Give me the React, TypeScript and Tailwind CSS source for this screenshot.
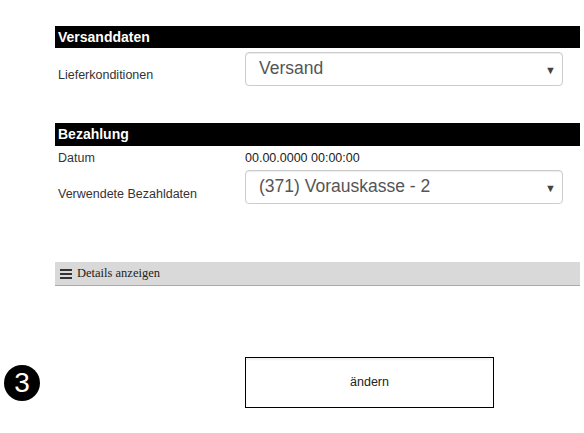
import React from "react";

function Select({ value }: { value: string }) {
  return (
    <div className="relative flex h-[34px] w-[318px] items-center rounded-[4px] border border-[#cccccc] bg-white pl-[13px] shadow-[inset_0_1px_1px_rgba(0,0,0,0.075)]">
      <span className="text-[17.5px] leading-none text-[#555555]">{value}</span>
      <span className="absolute right-[6px] top-[12px] text-[11px] leading-none text-[#444444]">▼</span>
    </div>
  );
}

export default function App() {
  return (
    <div className="relative h-[433px] w-[584px] bg-white font-['Liberation_Sans',Arial,sans-serif] text-[#333333]">
      <div className="ml-[55px] w-[525px] pt-[26px]">
        <div className="flex h-[22px] items-center bg-black pl-[3px] text-[14px] font-bold text-white">Versanddaten</div>
        <div className="mt-[4px] flex">
          <div className="w-[190px] pl-[3px] pt-[14px] text-[12.5px]">Lieferkonditionen</div>
          <Select value="Versand" />
        </div>

        <div className="mt-[37px] flex h-[23px] items-center bg-black pl-[3px] text-[14px] font-bold text-white">Bezahlung</div>
        <div className="mt-[4px] flex h-[16px] items-center text-[12.5px]">
          <div className="w-[190px] pl-[3px]">Datum</div>
          <div className="text-[#222222]">00.00.0000 00:00:00</div>
        </div>
        <div className="mt-[4px] flex">
          <div className="w-[190px] pl-[3px] pt-[15px] text-[12.5px]">Verwendete Bezahldaten</div>
          <Select value="(371) Vorauskasse - 2" />
        </div>

        <div className="mt-[58px] flex h-[24px] items-center border-b border-[#aaaaaa] bg-[#d9d9d9] pl-[5px] font-['Liberation_Serif','Times_New_Roman',serif] text-[12.5px] text-[#222222]">
          <svg width="12" height="10" viewBox="0 0 12 10" className="mr-[5px]">
            <rect x="0" y="0" width="12" height="2" fill="#333" />
            <rect x="0" y="4" width="12" height="2" fill="#333" />
            <rect x="0" y="8" width="12" height="2" fill="#333" />
          </svg>
          Details anzeigen
        </div>
      </div>

      <div className="mt-[71px] flex items-center">
        <div className="ml-[4px] flex h-[36px] w-[36px] items-center justify-center rounded-full bg-black text-[28px] font-medium leading-none text-white">3</div>
        <div className="ml-[205px] flex h-[51px] w-[249px] items-center justify-center border border-black bg-white text-[12.5px] text-[#222222] shadow-[inset_0_2px_2px_rgba(0,0,0,0.06)]">ändern</div>
      </div>
    </div>
  );
}
